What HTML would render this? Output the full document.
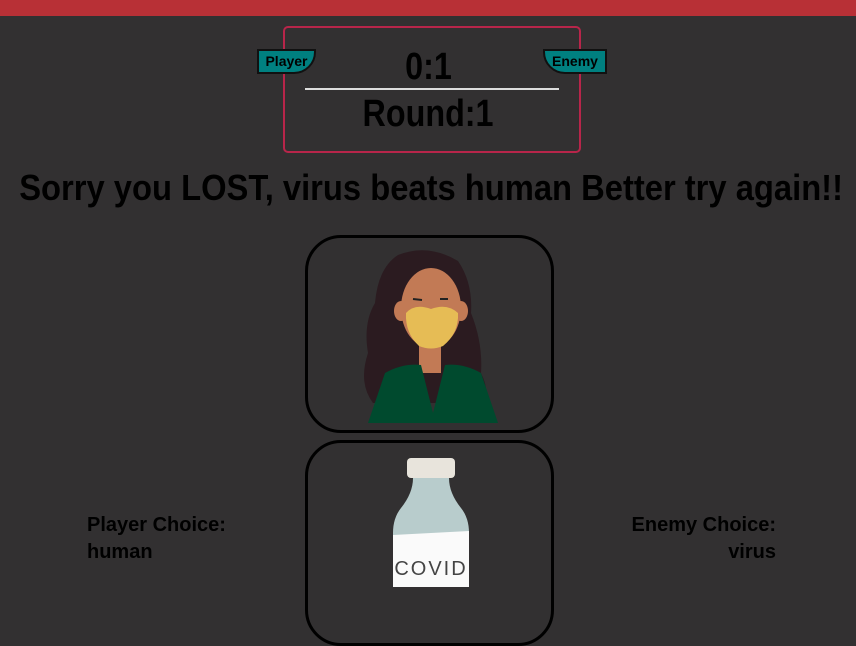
<!DOCTYPE html>
<html><head><style>
body{margin:0;width:856px;height:584px;overflow:hidden;background:#323031;font-family:"Liberation Sans",Arial,sans-serif;position:relative}
.bar{position:absolute;left:0;top:0;width:856px;height:16px;background:#b83036}
.box{position:absolute;left:283px;top:26px;width:294px;height:123px;border:2px solid #b8254a;border-radius:5px}
.tab{position:absolute;top:49px;height:21px;background:#008080;border:2px solid #111;font-weight:bold;font-size:14px;line-height:21px;color:#000;text-align:center}
.t{position:absolute;left:0;width:856px;text-align:center;font-weight:bold;color:#000;white-space:nowrap}
.sx{display:inline-block;transform:scaleX(.85)}
.card{position:absolute;left:305px;width:243px;border:3px solid #000;border-radius:36px}
.lbl{position:absolute;font-weight:bold;font-size:20px;color:#000;line-height:27px;white-space:nowrap}
</style></head><body>
<div class="bar"></div>
<div class="box"></div>
<div class="tab" style="left:257px;width:55px;border-radius:0 0 22px 0">Player</div>
<div class="tab" style="left:543px;width:60px;border-radius:0 0 0 22px">Enemy</div>
<div class="t" style="top:46px;font-size:38px;line-height:42px"><span class="sx">0:1</span></div>
<div style="position:absolute;left:305px;top:88px;width:254px;height:2px;background:#ddd"></div>
<div class="t" style="top:93px;font-size:38px;line-height:42px"><span class="sx">Round:1</span></div>
<div class="t" style="top:167px;font-size:36px;line-height:42px;left:-200px;width:1262px"><span class="sx" style="transform:scaleX(.909)">Sorry you LOST, virus beats human Better try again!!</span></div>
<div class="card" style="top:235px;height:192px">
<svg width="243" height="192" viewBox="305 235 243 192" style="position:absolute;left:0;top:0;border-radius:34px">
<path d="M395 252 Q425 240 455 258 Q470 280 468 310 Q480 340 478 370 Q488 390 478 400 L370 400 Q355 380 365 350 Q360 320 372 300 Q375 265 395 252Z" fill="#2b1b20"/>
<rect x="416" y="330" width="22" height="40" fill="#c27a55"/>
<path d="M365 420 L382 370 Q400 360 418 362 L430 410 L442 362 Q460 360 478 370 L495 420Z" fill="#004a2e"/>
<ellipse cx="428" cy="305" rx="30" ry="40" fill="#c27a55"/>
<ellipse cx="398" cy="308" rx="7" ry="10" fill="#c27a55"/>
<ellipse cx="458" cy="308" rx="7" ry="10" fill="#c27a55"/>
<path d="M403 310 Q412 300 428 306 Q444 300 455 310 Q456 330 440 343 Q428 348 416 343 Q402 330 403 310Z" fill="#e6bc55"/>
<path d="M410 296 l9 1 M437 296 l8 0" stroke="#222" stroke-width="2"/>
</svg></div>
<div class="card" style="top:440px;height:200px">
<svg width="243" height="144" viewBox="305 440 243 144" style="position:absolute;left:0;top:0">
<rect x="404" y="455" width="48" height="20" rx="4" fill="#e8e4dc"/>
<path d="M410 475 L446 475 Q446 490 458 505 Q466 515 466 530 L466 590 L390 590 L390 530 Q390 515 398 505 Q410 490 410 475Z" fill="#b8cccc"/>
<path d="M390 532 L466 528 L466 590 L390 590Z" fill="#fafafa"/>
<text x="428" y="572" font-family="Liberation Sans" font-size="20" fill="#444" text-anchor="middle" letter-spacing="2">COVID</text>
</svg></div>
<div class="lbl" style="left:87px;top:512px">Player Choice:<br>human</div>
<div class="lbl" style="right:80px;top:512px;text-align:right">Enemy Choice:<br>virus</div>
</body></html>
